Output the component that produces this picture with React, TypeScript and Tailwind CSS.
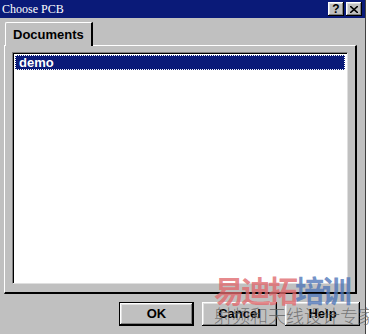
import React from "react";

const raised =
  "shadow-[inset_-1px_-1px_0_#000,inset_1px_1px_0_#fff,inset_-2px_-2px_0_#808080,inset_2px_2px_0_#dfdfdf]";

function TitleBtn({ children }: { children: React.ReactNode }) {
  return (
    <div
      className={`w-[16px] h-[14px] bg-[#c0c0c0] ${raised} flex items-center justify-center text-black text-[12px] font-bold leading-none`}
      style={{ fontFamily: '"Liberation Sans", Arial, sans-serif' }}
    >
      {children}
    </div>
  );
}

function Btn({ label, isDefault }: { label: string; isDefault?: boolean }) {
  return (
    <div
      className={`w-[75px] h-[24px] bg-[#c0c0c0] flex items-center justify-center ${
        isDefault ? "border border-black" : ""
      }`}
    >
      <div
        className={`w-full h-full ${raised} flex items-center justify-center text-[13px] font-bold text-black`}
        style={{ fontFamily: '"Liberation Sans", Arial, sans-serif' }}
      >
        {label}
      </div>
    </div>
  );
}

export default function App() {
  return (
    <div className="relative w-[369px] h-[334px] bg-white overflow-hidden">
      <div className="w-[366px] h-[334px] bg-[#c0c0c0] flex flex-col border-r border-[#404040]">
        {/* title bar */}
        <div className="h-[18px] bg-[#0a1a78] flex items-center justify-between pl-[2px] pr-[3px]">
          <span
            className="text-white text-[12px] leading-none"
            style={{ fontFamily: '"Liberation Serif", "Times New Roman", serif' }}
          >
            Choose PCB
          </span>
          <div className="flex gap-[2px]">
            <TitleBtn>?</TitleBtn>
            <TitleBtn>
              <svg width="8" height="7" viewBox="0 0 8 7">
                <path d="M0 0L8 7M8 0L0 7" stroke="#000" strokeWidth="1.6" />
              </svg>
            </TitleBtn>
          </div>
        </div>

        {/* tab area */}
        <div className="pl-[4px] pr-[8px] pt-[4px] flex flex-col">
          <div className="flex">
            <div className="ml-[1px] w-[88px] h-[24px] border-t border-l border-white border-r-2 border-r-black rounded-tl-[2px] flex items-start pl-[7px] pt-[5px] relative z-10 bg-[#c0c0c0] -mb-[1px]">
              <span
                className="text-[13px] font-bold text-black leading-none"
                style={{ fontFamily: '"Liberation Sans", Arial, sans-serif' }}
              >
                Documents
              </span>
            </div>
          </div>
          <div className="h-[249px] border-t border-l border-white border-r-2 border-b-2 border-r-black border-b-black px-[7px] pt-[6px] pb-[8px]">
            <div className="w-full h-full bg-white border-t border-l border-[#808080] shadow-[inset_1px_1px_0_#000] border-r border-b border-r-[#dfdfdf] border-b-[#dfdfdf] p-[2px]">
              <div className="h-[15px] bg-[#0a1a78] border border-dotted border-white flex items-center pl-[3px]">
                <span
                  className="text-[13px] font-bold text-white leading-none"
                  style={{ fontFamily: '"Liberation Sans", Arial, sans-serif' }}
                >
                  demo
                </span>
              </div>
            </div>
          </div>
        </div>

        {/* buttons */}
        <div className="flex justify-end gap-[8px] pr-[5px] pt-[8px]">
          <Btn label="OK" isDefault />
          <Btn label="Cancel" />
          <Btn label="Help" />
        </div>
      </div>

      {/* watermark */}
      <div className="absolute left-[214px] top-[274px] pointer-events-none flex flex-col">
        <div
          className="text-[30px] font-bold leading-none tracking-[-3px]"
          style={{ fontFamily: '"Noto Sans CJK SC", sans-serif' }}
        >
          <span className="text-[#e06a6e]/80">易迪拓</span>
          <span className="text-[#4f76b8]/80">培训</span>
        </div>
        <div
          className="text-[18px] leading-none text-[#606060]/80 mt-[2px] whitespace-nowrap"
          style={{ fontFamily: '"Noto Sans CJK SC", sans-serif', fontWeight: 300 }}
        >
          射频和天线设计专家
        </div>
      </div>
    </div>
  );
}
